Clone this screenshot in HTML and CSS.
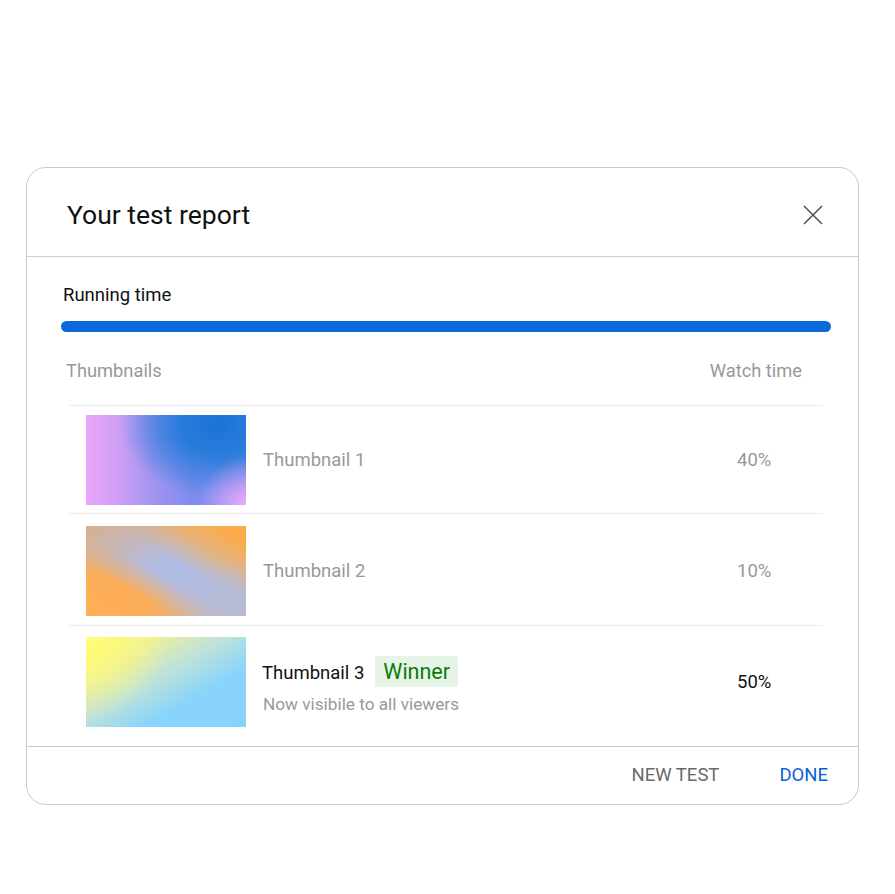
FILE: index.html
```html
<!DOCTYPE html>
<html lang="en">
<head>
    <meta charset="UTF-8">
    <meta name="viewport" content="width=device-width, initial-scale=1.0">
    <title>Your test report</title>
    <link rel="stylesheet" href="styles.css">
</head>
<body>

    <div class="page">
        <div class="dialog">
            <div class="dialog-header">
                <h2>Your test report</h2>
                <button class="close-btn" aria-label="Close">
                    <svg width="20" height="20" viewBox="0 0 20 20">
                        <path d="M1 1 L19 19 M19 1 L1 19" stroke="#555" stroke-width="1.6" fill="none"/>
                    </svg>
                </button>
            </div>

            <div class="dialog-body">
                <div class="running-label">Running time</div>
                <div class="progress"><div class="progress-fill"></div></div>

                <div class="table-head">
                    <span>Thumbnails</span>
                    <span>Watch time</span>
                </div>

                <div class="row row-1">
                    <div class="thumb thumb-1"></div>
                    <div class="row-name">Thumbnail 1</div>
                    <div class="row-value">40%</div>
                </div>
                <div class="row row-2">
                    <div class="thumb thumb-2"></div>
                    <div class="row-name">Thumbnail 2</div>
                    <div class="row-value">10%</div>
                </div>
                <div class="row row-3 winner-row">
                    <div class="thumb thumb-3"></div>
                    <div class="row-name">
                        <div class="name-line">Thumbnail 3 <span class="badge">Winner</span></div>
                        <div class="name-sub">Now visibile to all viewers</div>
                    </div>
                    <div class="row-value">50%</div>
                </div>
            </div>

            <div class="dialog-footer">
                <button class="text-btn">NEW TEST</button>
                <button class="text-btn primary">DONE</button>
            </div>
        </div>
    </div>

</body>
</html>
```

FILE: styles.css
```css
body {
    margin: 0;
    font-family: Roboto, "Liberation Sans", sans-serif;
    background: #fff;
    color: #111;
}
.page {
    padding: 167px 0 0 26px;
}
.dialog {
    width: 831px;
    height: 636px;
    border: 1px solid #c9c9c9;
    border-radius: 20px;
    overflow: hidden;
    display: flex;
    flex-direction: column;
}
.dialog-header {
    height: 88px;
    display: flex;
    align-items: center;
    justify-content: space-between;
    padding: 0 35px 0 40px;
    border-bottom: 1px solid #cfcfcf;
}
.dialog-header h2 {
    margin: 0;
    font-size: 26.5px;
    font-weight: 400;
    color: #111;
    padding-top: 4px;
}
.close-btn {
    border: none;
    background: none;
    padding: 0;
    width: 20px;
    height: 20px;
    cursor: pointer;
    margin-top: 5px;
}
.dialog-body {
    flex: 1;
    padding: 28px 27px 0 34px;
}
.running-label {
    font-size: 18.5px;
    line-height: 20px;
    padding-left: 2px;
    color: #111;
}
.progress {
    margin-top: 16px;
    height: 11px;
    border-radius: 6px;
    background: #e0e0e0;
    overflow: hidden;
}
.progress-fill {
    width: 100%;
    height: 100%;
    background: #0a6ad9;
}
.table-head {
    display: flex;
    justify-content: space-between;
    font-size: 18.3px;
    line-height: 20px;
    color: #999;
    padding: 29px 29px 24px 5px;
}
.row {
    display: flex;
    align-items: center;
    margin: 0 8px;
    border-top: 1px solid #ececec;
}
.row-1 { padding: 9px 0 8px; }
.row-2 { padding: 12px 0 9px; }
.row-3 { padding: 11px 0 18px; }
.thumb {
    width: 160px;
    height: 90px;
    margin-left: 17px;
    flex-shrink: 0;
}
.thumb-1 {
    background:
        radial-gradient(circle at 100% 100%, #efa8fa 0, rgba(239,168,250,0) 26%),
        radial-gradient(ellipse 60% 80% at 82% 12%, #1a73d8 0, #2a7cdb 40%, rgba(42,124,219,0) 100%),
        linear-gradient(90deg, #e9a6fc 0%, #d2a0f6 18%, #a194ef 42%, #808ded 65%, #7b8ff0 100%);
}
.thumb-2 {
    background:
        radial-gradient(ellipse at 100% 100%, #b7bacf 0, rgba(183,186,207,0) 45%),
        radial-gradient(ellipse at 0 0, #d9b08d 0, rgba(217,176,141,0) 45%),
        linear-gradient(to top right, #fdae55 0%, #fcad58 28%, #b1bce2 46%, #afbde6 58%, #e6b27a 76%, #fdab48 92%);
}
.thumb-3 {
    background:
        radial-gradient(circle at 0 0, #fefd74 0, rgba(254,253,116,0) 45%),
        linear-gradient(150deg, #fdf77e 0%, #eeee9e 22%, #bde2da 45%, #88d4fc 68%, #88d3fd 100%);
}
.row-name {
    flex: 1;
    padding-left: 17px;
    font-size: 18.5px;
    color: #999;
}
.row-value {
    width: 86px;
    font-size: 18.5px;
    color: #999;
}
.winner-row .row-name {
    margin-top: 6px;
    padding-left: 16px;
}
.winner-row .row-value {
    color: #111;
}
.name-line {
    color: #111;
    display: flex;
    align-items: baseline;
}
.badge {
    margin-left: 11px;
    background: #e6f4e6;
    color: #0b7a0b;
    font-size: 21.5px;
    line-height: 31px;
    padding: 0 8px;
    border-radius: 2px;
}
.name-sub {
    font-size: 17.2px;
    line-height: 20px;
    color: #999;
    margin-top: 7px;
    padding-left: 1px;
}
.dialog-footer {
    height: 57px;
    border-top: 1px solid #c9c9c9;
    display: flex;
    align-items: center;
    justify-content: flex-end;
    padding-right: 30px;
    gap: 60px;
}
.text-btn {
    border: none;
    background: none;
    padding: 0;
    font-family: inherit;
    font-size: 18.5px;
    color: #6a6a6a;
    cursor: pointer;
    margin-top: -2px;
}
.text-btn.primary {
    color: #0b5fd6;
}
```
